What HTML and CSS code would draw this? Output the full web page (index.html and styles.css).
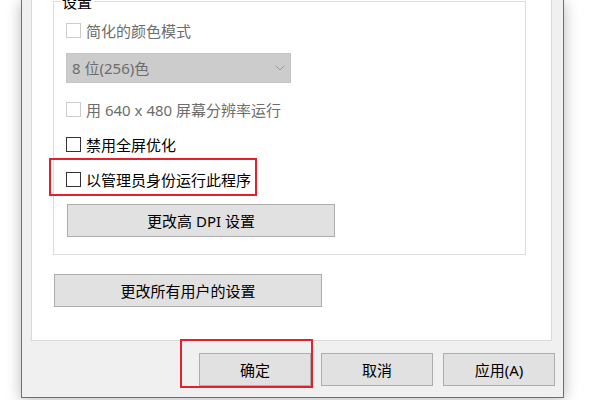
FILE: index.html
```html
<!DOCTYPE html>
<html lang="zh-CN">
<head>
<meta charset="utf-8">
<title>属性</title>
<link rel="stylesheet" href="styles.css">
</head>
<body>
<div class="dialog">
  <div class="panel">
    <div class="group">
      <div class="legend">设置</div>
      <div class="row disabled row1"><span class="box"></span><span>简化的颜色模式</span></div>
      <div class="select"><span>8 位(256)色</span>
        <svg class="chev" width="10" height="6" viewBox="0 0 10 6"><path d="M0.5 0.5 L5 5 L9.5 0.5" fill="none" stroke="#9a9a9a" stroke-width="1"/></svg>
      </div>
      <div class="row disabled row3"><span class="box"></span><span>用 640 x 480 屏幕分辨率运行</span></div>
      <div class="row row4"><span class="box"></span><span>禁用全屏优化</span></div>
      <div class="row row5"><span class="box"></span><span>以管理员身份运行此程序</span></div>
      <button class="btn dpi">更改高 DPI 设置</button>
    </div>
    <button class="btn allusers">更改所有用户的设置</button>
  </div>
  <div class="actions">
    <button class="btn act">确定</button>
    <button class="btn act">取消</button>
    <button class="btn act">应用(A)</button>
  </div>
</div>
<div class="mark mark-admin"></div>
<div class="mark mark-ok"></div>
</body>
</html>
```
FILE: styles.css
```css
html, body {
  margin: 0;
  padding: 0;
}
body {
  width: 600px;
  height: 400px;
  overflow: hidden;
  background: #ffffff;
  position: relative;
  font-family: "Noto Sans", "Noto Sans CJK SC", sans-serif;
  font-size: 15px;
  line-height: 20px;
  color: #000;
}
.dialog {
  margin-left: 21px;
  width: 543px;
  height: 398px;
  box-sizing: border-box;
  border: 1px solid #6f6f6f;
  border-top: 0;
  background: #f0f0f0;
  box-shadow: 0 2px 14px rgba(0, 0, 0, 0.28);
  display: flex;
  flex-direction: column;
}
.panel {
  margin: 0 11px 0 9px;
  height: 341px;
  box-sizing: border-box;
  background: #ffffff;
  border: 1px solid #d9d9d9;
  border-top: 0;
  padding: 1px 25px 0 21px;
}
.group {
  height: 254px;
  box-sizing: border-box;
  border: 1px solid #dcdcdc;
  padding: 0 0 0 12px;
}
.legend {
  width: fit-content;
  margin: -10px 0 0 -6px;
  padding: 0 2px;
  background: #ffffff;
  height: 20px;
}
.row {
  display: flex;
  align-items: center;
  height: 15px;
  gap: 5px;
  white-space: nowrap;
}
.box {
  width: 15px;
  height: 15px;
  box-sizing: border-box;
  border: 1px solid #333333;
  background: #fff;
  flex: none;
}
.disabled {
  color: #6d6d6d;
}
.disabled .box {
  border-color: #cccccc;
}
.row1 { margin-top: 11px; }
.row3 { margin-top: 19px; }
.row4 { margin-top: 20px; }
.row5 { margin-top: 20px; }
.select {
  margin-top: 15px;
  width: 225px;
  height: 30px;
  box-sizing: border-box;
  background: #cccccc;
  border: 1px solid #c6c6c6;
  color: #6d6d6d;
  display: flex;
  align-items: center;
  justify-content: space-between;
  padding: 0 5px 0 5px;
}
.chev {
  margin-right: 0;
}
.btn {
  display: block;
  box-sizing: border-box;
  height: 33px;
  background: #e1e1e1;
  border: 1px solid #adadad;
  font: inherit;
  color: #000;
  padding: 0;
  text-align: center;
}
.dpi {
  margin: 17px 0 0 1px;
  width: 268px;
}
.allusers {
  margin: 19px 0 0 1px;
  width: 268px;
}
.actions {
  display: flex;
  justify-content: flex-end;
  gap: 10px;
  padding-right: 8px;
  margin-top: 12px;
}
.act {
  width: 112px;
}
.mark {
  position: absolute;
  box-sizing: border-box;
  border: 2px solid #e3202b;
}
.mark-admin {
  left: 49px;
  top: 158px;
  width: 208px;
  height: 38px;
}
.mark-ok {
  left: 180px;
  top: 339px;
  width: 133px;
  height: 49px;
}
```
